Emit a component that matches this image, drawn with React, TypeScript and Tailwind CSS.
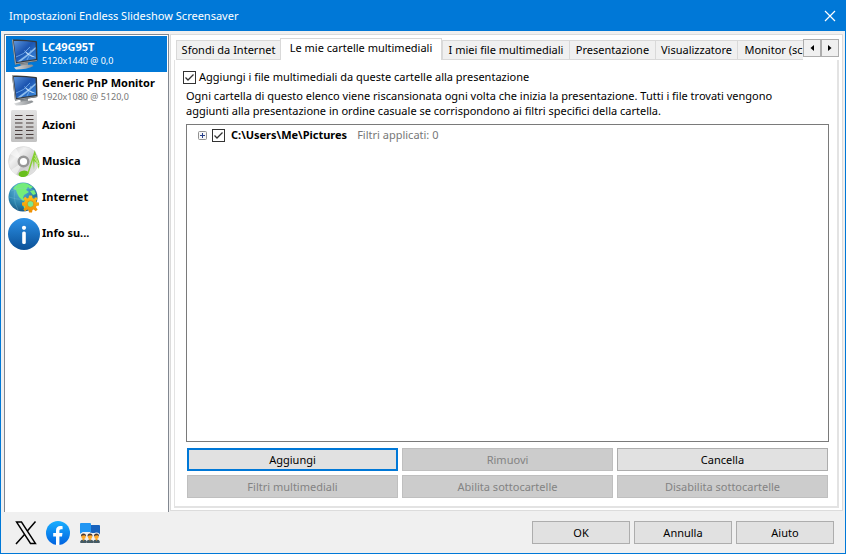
import { useState } from 'react';
import type { ReactNode } from 'react';
import clsx from 'clsx';

function MonitorIcon({ id }: { id: string }) {
  return (
    <svg width="32" height="32" viewBox="0 0 32 32" aria-hidden="true">
      <defs>
        <linearGradient id={`${id}-screen`} x1="0" y1="0" x2="1" y2="1">
          <stop offset="0" stopColor="#5b95de" />
          <stop offset="0.45" stopColor="#1c55b0" />
          <stop offset="1" stopColor="#3a8ce0" />
        </linearGradient>
        <linearGradient id={`${id}-stand`} x1="0" y1="0" x2="1" y2="0">
          <stop offset="0" stopColor="#dcdedf" />
          <stop offset="1" stopColor="#85898d" />
        </linearGradient>
      </defs>
      <path d="M12 24 L20 23 L20 29 L13 30Z" fill="#8b9094" />
      <path d="M6 29.500 Q15 26.500 24 26.500 L25.500 28 Q19 31.500 8 31.500Z" fill={`url(#${id}-stand)`} />
      <path d="M4 1.500 Q16 1 28 3 Q29 3 29 4 L29.500 22 Q29.500 23 28.500 23.200 L7 26.500Z" fill="#33383d" />
      <path d="M4 1.500 L7 26.500 L8 26.300 L5 1.500Z" fill="#a7adb2" />
      <path d="M7 26.500 L29 23 L28.800 22 L7 25.200Z" fill="#8f959a" />
      <path d="M5.800 3 Q16 2.600 27.500 4.300 L28 21 L8.300 24Z" fill={`url(#${id}-screen)`} />
      <path d="M9 23.800 Q18 18 27.500 9 L27.600 11 Q20 18 13 23.200Z" fill="#a8d2f7" opacity="0.8" />
      <path d="M16 12 Q21 17 28 19.500 Q19 18.500 16 12Z" fill="#d0e8fc" opacity="0.9" />
      <path d="M8 19 Q16 17 22 9 M19 22 Q22 17 23 12" stroke="#79b3ef" strokeWidth="0.8" fill="none" />
    </svg>
  );
}

function ActionsIcon() {
  return (
    <svg width="32" height="32" viewBox="0 0 32 32" aria-hidden="true">
      <defs>
        <linearGradient id="actions-bg" x1="0" y1="0" x2="0" y2="1">
          <stop offset="0" stopColor="#e2e2e2" />
          <stop offset="1" stopColor="#c2c2c2" />
        </linearGradient>
      </defs>
      <rect x="3" y="0" width="26" height="32" rx="1.5" fill="url(#actions-bg)" />
      <path
        d="M7 5.500h7.500M18 5.500h7.500M7 9.500h7.500M18 9.500h7.500M7 13h7.500M18 13h7.500M7 17h7.500M18 17h7.500M7 20.500h7.500M18 20.500h7.500M7 24.500h7.500M18 24.500h7.500M7 28h7.500M18 28h7.500"
        stroke="#493c3b"
        strokeWidth="1.2"
      />
    </svg>
  );
}

function MusicIcon() {
  return (
    <svg width="32" height="32" viewBox="0 0 32 32" aria-hidden="true">
      <defs>
        <linearGradient id="disc" x1="0" y1="0" x2="1" y2="1">
          <stop offset="0" stopColor="#c9c9c9" />
          <stop offset="0.3" stopColor="#f1f1f1" />
          <stop offset="0.6" stopColor="#cdcdcd" />
          <stop offset="1" stopColor="#eeeeee" />
        </linearGradient>
      </defs>
      <circle cx="15.500" cy="15.500" r="15" fill="url(#disc)" stroke="#d0d0d0" strokeWidth="0.500" />
      <path d="M15.500 15.500 L2 8 A15 15 0 0 1 8 2.500Z M15.500 15.500 L3 24 A15 15 0 0 0 8 29Z" fill="#fafafa" opacity="0.6" />
      <circle cx="15.500" cy="15.500" r="4.800" fill="#ffffff" stroke="#979797" strokeWidth="2.400" />
      <ellipse cx="15.500" cy="27.800" rx="5" ry="3.200" fill="#69bf1d" transform="rotate(-8 15.500 27.800)" />
      <path d="M19 28 L26.800 4 Q28 10 30.500 14 Q32.500 18 30.500 23 Q30 18 26.500 15 L26 24 L25 14 L20.500 28Z" fill="#84cf2e" />
      <path d="M27 9 Q29 14 30.500 18 M26.500 12 Q29 15 30 20" stroke="#d8f2b4" strokeWidth="0.7" fill="none" />
    </svg>
  );
}

function InternetIcon() {
  return (
    <svg width="32" height="32" viewBox="0 0 32 32" aria-hidden="true">
      <defs>
        <radialGradient id="globe" cx="0.400" cy="0.250" r="0.800">
          <stop offset="0" stopColor="#65bbdd" />
          <stop offset="0.600" stopColor="#2b83ad" />
          <stop offset="1" stopColor="#16517c" />
        </radialGradient>
        <linearGradient id="gear" x1="0" y1="0" x2="0" y2="1">
          <stop offset="0" stopColor="#ffc21c" />
          <stop offset="1" stopColor="#ee8c00" />
        </linearGradient>
      </defs>
      <circle cx="15" cy="15" r="14.500" fill="url(#globe)" />
      <path
        d="M7 4 Q12 0 19 1.500 L25 5 L22 7 L20 5 L18 8 L21 10 L16 13 L15 16 L17 18 L15 19 L11 15 L9 11 L8 8 L5 7Z M22 9 L26 8 L28 12 L25 13Z M17 18 L22 18 L24 22 L20 27 L17 29 L15 23Z"
        fill="#74ed7a"
      />
      <path d="M3 9 Q15 3 28 9 M1 15 Q15 20 29 15 M9 2 Q3 15 10 28" fill="none" stroke="#83c8dd" strokeWidth="0.500" opacity="0.6" />
      <g transform="translate(22.500 22)">
        <path
          d="M-1.500 -8.500 H1.500 L2 -6 L3.500 -5.300 L5.500 -7 L7.200 -5.200 L5.500 -3 L6 -1.700 L8.500 -1.500 V1.500 L6 2 L5.500 3.300 L7.200 5.500 L5.200 7.200 L3.200 5.500 L2 6 L1.500 8.500 H-1.500 L-2 6 L-3.300 5.500 L-5.500 7.200 L-7.200 5.200 L-5.500 3.200 L-6 2 L-8.500 1.500 V-1.500 L-6 -2 L-5.500 -3.300 L-7.200 -5.500 L-5.200 -7.200 L-3.300 -5.500 L-2 -6Z"
          fill="url(#gear)"
        />
        <circle r="3.300" fill="#79e991" stroke="#d98b08" strokeWidth="0.700" />
      </g>
    </svg>
  );
}

function InfoIcon() {
  return (
    <svg width="32" height="32" viewBox="0 0 32 32" aria-hidden="true">
      <defs>
        <linearGradient id="info-bg" x1="0" y1="0" x2="0" y2="1">
          <stop offset="0" stopColor="#2b91e8" />
          <stop offset="1" stopColor="#0b5096" />
        </linearGradient>
      </defs>
      <circle cx="16" cy="16" r="16" fill="url(#info-bg)" />
      <circle cx="16" cy="9.800" r="2.100" fill="#ffffff" />
      <rect x="14.200" y="13.500" width="3.600" height="12.500" rx="1.500" fill="#ffffff" />
    </svg>
  );
}

function XLogo() {
  return (
    <svg width="22" height="24" viewBox="0 0 22 24" aria-hidden="true">
      <path d="M1.500 1 H6.500 L20.500 22.500 H15.500Z" fill="#f0f0f0" stroke="#000000" strokeWidth="1.400" />
      <path d="M20.500 0.500 L12.300 10 M9.500 13.500 L1 23" stroke="#000000" strokeWidth="1.500" />
    </svg>
  );
}

function FacebookLogo() {
  return (
    <svg width="24" height="24" viewBox="0 0 24 24" aria-hidden="true">
      <defs>
        <linearGradient id="fb" x1="0" y1="0" x2="0" y2="1">
          <stop offset="0" stopColor="#19afff" />
          <stop offset="1" stopColor="#0062e0" />
        </linearGradient>
      </defs>
      <circle cx="12" cy="12" r="12" fill="url(#fb)" />
      <path
        d="M10 24 V15.500 H7.200 V12 H10 V9.500 C10 6.600 11.700 5 14.300 5 C15.500 5 16.600 5.200 16.600 5.200 V8.200 H15.200 C13.800 8.200 13.400 9 13.400 10 V12 H16.500 L16 15.500 H13.400 V24Z"
        fill="#ffffff"
      />
    </svg>
  );
}

function ForumIcon() {
  return (
    <svg width="22" height="20" viewBox="0 0 22 20" aria-hidden="true">
      <path d="M11 2 H20 Q21 2 21 3 V12 L18 10 H11Z" fill="#1762bd" />
      <path d="M2 0 H11 Q12 0 12 1 V9 H4 L1 11 V1 Q1 0 2 0Z" fill="#2196f3" />
      {[4.5, 11, 17.5].map((cx) => (
        <g key={cx}>
          <circle cx={cx} cy="13" r="3.6" fill="#f0f0f0" />
          <path d={`M${cx - 3.2} 20 V18.2 Q${cx - 3} 16.400 ${cx} 16.400 Q${cx + 3} 16.400 ${cx + 3.2} 18.200 V20Z`} fill="#455a64" />
          <path d={`M${cx - 1} 16 L${cx} 18 L${cx + 1} 16Z`} fill="#ff9800" />
          <circle cx={cx} cy="13.700" r="2.200" fill="#ffa726" />
          <path d={`M${cx - 2.5} 13.500 Q${cx - 2.7} 10.500 ${cx} 10.500 Q${cx + 2.7} 10.500 ${cx + 2.5} 13.500 L${cx + 1.2} 12.200 L${cx - 1} 12.500Z`} fill="#4e3a30" />
        </g>
      ))}
    </svg>
  );
}

interface SidebarItem {
  title: string;
  detail?: string;
  icon: ReactNode;
}

const sidebarItems: SidebarItem[] = [
  { title: 'LC49G95T', detail: '5120x1440 @ 0,0', icon: <MonitorIcon id="first" /> },
  { title: 'Generic PnP Monitor', detail: '1920x1080 @ 5120,0', icon: <MonitorIcon id="second" /> },
  { title: 'Azioni', icon: <ActionsIcon /> },
  { title: 'Musica', icon: <MusicIcon /> },
  { title: 'Internet', icon: <InternetIcon /> },
  { title: 'Info su...', icon: <InfoIcon /> },
];

const tabs = [
  { label: 'Sfondi da Internet', width: 'w-[104px]' },
  { label: 'Le mie cartelle multimediali', width: 'w-[162px]' },
  { label: 'I miei file multimediali', width: 'w-[127px]' },
  { label: 'Presentazione', width: 'w-[86px]' },
  { label: 'Visualizzatore', width: 'w-[82px]' },
  { label: 'Monitor (sc', width: 'w-[72px]' },
];

function CheckBox({ id, checked, onChange }: { id: string; checked: boolean; onChange: (value: boolean) => void }) {
  return (
    <span className="grid size-[13px] shrink-0">
      <input
        id={id}
        type="checkbox"
        checked={checked}
        onChange={(e) => onChange(e.target.checked)}
        className="col-start-1 row-start-1 size-[13px] appearance-none border border-[#333333] bg-white"
      />
      {checked && (
        <svg viewBox="0 0 13 13" className="pointer-events-none col-start-1 row-start-1 size-[13px]" aria-hidden="true">
          <path d="M2.500 6.500 L5 9 L10.500 3.500" fill="none" stroke="#333333" strokeWidth="1.300" />
        </svg>
      )}
    </span>
  );
}

function PushButton({ label, disabled, focused }: { label: string; disabled?: boolean; focused?: boolean }) {
  return (
    <button
      type="button"
      disabled={disabled}
      className={clsx(
        'flex h-[23px] w-full items-center justify-center leading-4',
        disabled && 'border border-[#bfbfbf] bg-[#cccccc] text-[#838383]',
        focused && 'border-2 border-[#0078d7] bg-[#e1e1e1]',
        !disabled && !focused && 'border border-[#adadad] bg-[#e1e1e1]',
      )}
    >
      {label}
    </button>
  );
}

export default function App() {
  const [section, setSection] = useState(0);
  const [activeTab, setActiveTab] = useState(1);
  const [useFolders, setUseFolders] = useState(true);
  const [folderOn, setFolderOn] = useState(true);

  return (
    <div className="flex min-h-screen flex-col border border-[#0078d7] bg-[#f0f0f0] font-['Noto_Sans','Open_Sans',sans-serif] text-[11px] text-black">
      {/* Title bar */}
      <header className="flex h-[30px] items-center justify-between bg-[#0078d7] pr-[9px] pl-2 text-white">
        <h1>Impostazioni Endless Slideshow Screensaver</h1>
        <button type="button" aria-label="Chiudi">
          <svg width="12" height="12" viewBox="0 0 12 12" aria-hidden="true">
            <path d="M1 1 L11 11 M11 1 L1 11" stroke="#ffffff" strokeWidth="1.200" />
          </svg>
        </button>
      </header>

      <div className="flex flex-1 gap-px pt-[3px] pr-0.5 pl-[3px]">
        {/* Sections */}
        <nav className="w-[165px] shrink-0 border border-b-0 border-[#828790] bg-white p-px">
          {sidebarItems.map((item, i) => (
            <button
              key={item.title}
              type="button"
              onClick={() => setSection(i)}
              className={clsx(
                'flex h-9 w-full items-center gap-0.5 pl-0.5 text-left whitespace-nowrap',
                section === i && 'bg-[#0078d7] text-white',
              )}
            >
              <span className="shrink-0">{item.icon}</span>
              <span className="flex flex-col pb-0.5">
                <span className="leading-4 font-bold">{item.title}</span>
                {item.detail && (
                  <span className={clsx('text-[9px] leading-3', section !== i && 'text-[#777777]')}>{item.detail}</span>
                )}
              </span>
            </button>
          ))}
        </nav>

        <main className="mb-px flex min-w-0 flex-1 flex-col border border-[#dcdcdc] bg-white px-[3px] pt-[3px] pb-0.5">
          {/* Tab strip */}
          <div className="flex h-[22px] items-end pl-0.5">
            <div role="tablist" className="flex min-w-0 flex-1 items-end overflow-hidden">
              {tabs.map((tab, i) => (
                <button
                  key={tab.label}
                  type="button"
                  role="tab"
                  aria-selected={activeTab === i}
                  onClick={() => setActiveTab(i)}
                  className={clsx(
                    'shrink-0 border-t border-l border-[#d9d9d9] text-center leading-4 whitespace-nowrap',
                    tab.width,
                    activeTab === i ? 'z-10 h-[22px] border-r bg-white pb-1' : 'h-5 border-b bg-[#f0f0f0]',
                  )}
                >
                  {tab.label}
                </button>
              ))}
            </div>
            <div className="flex h-full items-start pt-px">
              <button type="button" aria-label="Schede precedenti" className="grid size-[18px] place-items-center border border-[#adadad] bg-[#f0f0f0]">
                <svg width="4" height="6" viewBox="0 0 4 6" aria-hidden="true">
                  <path d="M4 0 L0.500 3 L4 6Z" />
                </svg>
              </button>
              <button type="button" aria-label="Schede successive" className="grid size-[18px] place-items-center border border-[#adadad] bg-[#f0f0f0]">
                <svg width="4" height="6" viewBox="0 0 4 6" aria-hidden="true">
                  <path d="M0 0 L3.500 3 L0 6Z" />
                </svg>
              </button>
            </div>
          </div>

          <section className="flex flex-1 flex-col border-r-2 border-b-2 border-l border-[#e3e3e3] px-2 pt-[7px] pb-2">
            <div className="flex h-5 items-center gap-[3px]">
              <CheckBox id="use-folders" checked={useFolders} onChange={setUseFolders} />
              <label htmlFor="use-folders">Aggiungi i file multimediali da queste cartelle alla presentazione</label>
            </div>
            <p className="mt-px pr-8 pl-[3px] leading-[15px]">
              Ogni cartella di questo elenco viene riscansionata ogni volta che inizia la presentazione. Tutti i file trovati
              vengono aggiunti alla presentazione in ordine casuale se corrispondono ai filtri specifici della cartella.
            </p>

            <div className="mt-1.5 ml-[3px] flex-1 border border-[#7a7a7a] bg-white pt-px pl-[11px]">
              <div className="flex h-[18px] items-center">
                <button type="button" aria-label="Espandi" className="mr-[5px]">
                  <svg width="9" height="9" viewBox="0 0 9 9" aria-hidden="true">
                    <rect x="0.500" y="0.500" width="8" height="8" rx="1" fill="#f6f6f6" stroke="#919191" />
                    <path d="M2 4.500 H7 M4.500 2 V7" stroke="#27408b" />
                  </svg>
                </button>
                <CheckBox id="folder" checked={folderOn} onChange={setFolderOn} />
                <label htmlFor="folder" className="ml-1.5 font-bold">
                  C:\Users\Me\Pictures
                </label>
                <span className="ml-2.5 text-[#777777]">Filtri applicati: 0</span>
              </div>
            </div>

            <div className="mt-1.5 mr-px ml-1 grid grid-cols-3 gap-1">
              <PushButton label="Aggiungi" focused />
              <PushButton label="Rimuovi" disabled />
              <PushButton label="Cancella" />
              <PushButton label="Filtri multimediali" disabled />
              <PushButton label="Abilita sottocartelle" disabled />
              <PushButton label="Disabilita sottocartelle" disabled />
            </div>
          </section>
        </main>
      </div>

      {/* Footer */}
      <footer className="flex h-[41px] items-center justify-between pr-[11px] pl-3.5">
        <div className="flex items-center gap-[9px]">
          <a href="#x" aria-label="X">
            <XLogo />
          </a>
          <a href="#facebook" aria-label="Facebook">
            <FacebookLogo />
          </a>
          <a href="#forum" aria-label="Forum">
            <ForumIcon />
          </a>
        </div>
        <div className="grid w-[302px] grid-cols-3 gap-1">
          <PushButton label="OK" />
          <PushButton label="Annulla" />
          <PushButton label="Aiuto" />
        </div>
      </footer>
    </div>
  );
}
